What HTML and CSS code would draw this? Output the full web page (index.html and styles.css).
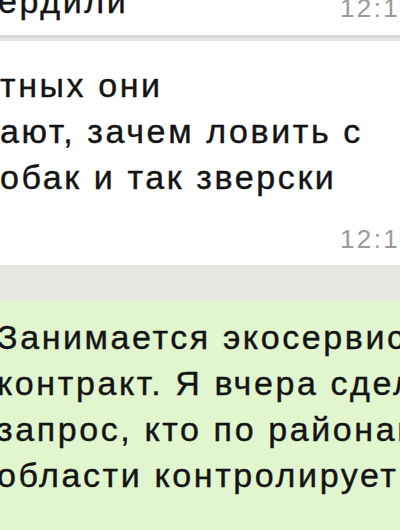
FILE: index.html
```html
<!DOCTYPE html>
<html lang="ru">
<head>
    <meta charset="UTF-8">
    <meta name="viewport" content="width=device-width, initial-scale=1.0">
    <title>Чат</title>
    <link rel="stylesheet" href="styles.css">
</head>
<body>

<div class="chat">

    <!-- previous message, mostly scrolled away -->
    <div class="bubble in first">
        <div class="text"><div class="line">ердили</div></div>
        <span class="time top-time">12:15</span>
    </div>

    <div class="bubble in second">
        <div class="text">
            <div class="line">тных они</div>
            <div class="line">ают, зачем ловить с</div>
            <div class="line">обак и так зверски</div>
        </div>
        <div class="meta"><span class="time">12:16</span></div>
    </div>

    <div class="bubble out">
        <div class="text">
            <div class="line">Занимается экосервис</div>
            <div class="line">контракт. Я вчера сделал</div>
            <div class="line">запрос, кто по районам</div>
            <div class="line">области контролирует</div>
        </div>
    </div>

</div>

</body>
</html>
```

FILE: styles.css
```css
/* General Styling */
body {
    margin: 0;
    padding: 0;
    width: 400px;
    height: 530px;
    overflow: hidden;
    background-color: #e8e6e3;
    font-family: "Liberation Sans", Arial, sans-serif;
    color: #141414;
}

.chat {
    display: flex;
    flex-direction: column;
    margin: 0 -30px 0 -8px;
}

/* Bubbles */
.bubble {
    background-color: #ffffff;
}

.bubble.in.first {
    display: flex;
    justify-content: space-between;
    align-items: flex-end;
    margin-top: -22px;
    padding: 0 13px 11px 6px;
    box-shadow: 0 3px 0 #d9d7d4;
}

.bubble.in.second {
    margin-top: 6px;
    padding: 21px 13px 13px 8px;
}

.bubble.out {
    margin-top: 35px;
    padding: 14px 14px 40px 5px;
    background-color: #e1f6cf;
}

/* Text */
.text {
    font-size: 34px;
    line-height: 46px;
    letter-spacing: 2.6px;
    white-space: nowrap;
    -webkit-text-stroke: 0.4px #141414;
}

.meta {
    display: flex;
    justify-content: flex-end;
    margin-top: 26px;
}

.time {
    font-size: 26px;
    line-height: 26px;
    letter-spacing: 2.4px;
    color: #9b9b9b;
    white-space: nowrap;
}

.top-time {
    margin-bottom: 3px;
}
```
